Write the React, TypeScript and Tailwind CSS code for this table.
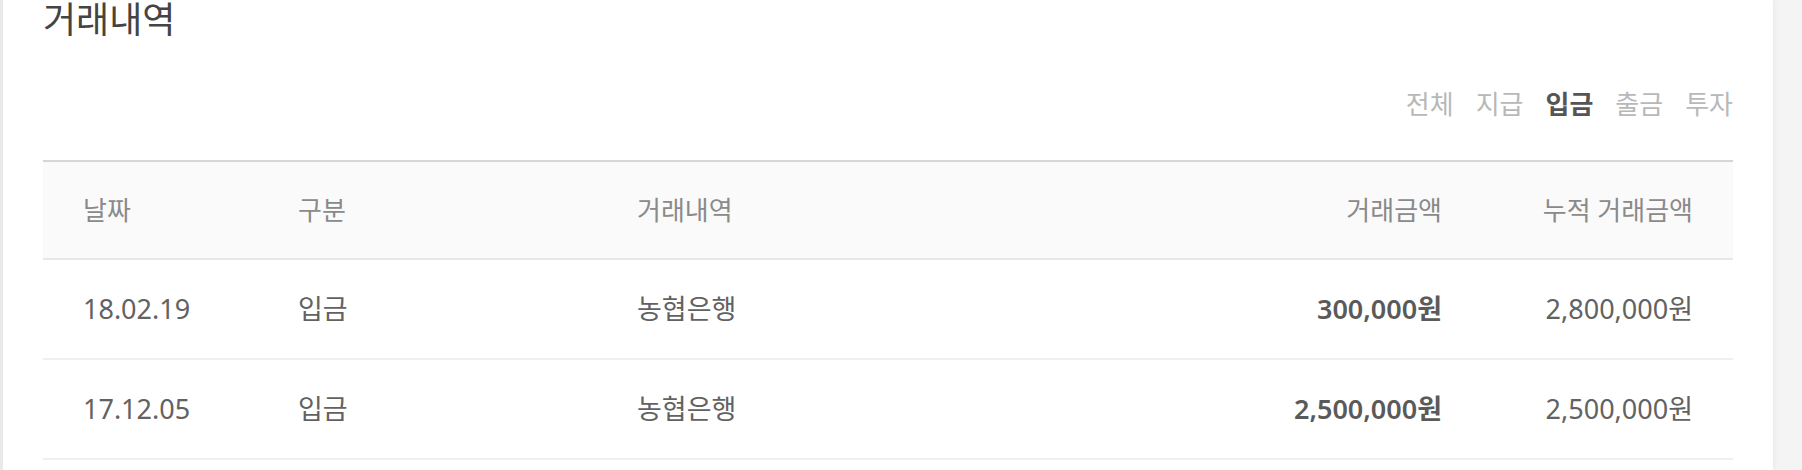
import React from "react";

const rows = [
  { date: "18.02.19", kind: "입금", desc: "농협은행", amount: "300,000원", total: "2,800,000원" },
  { date: "17.12.05", kind: "입금", desc: "농협은행", amount: "2,500,000원", total: "2,500,000원" },
];

const tabs = ["전체", "지급", "입금", "출금", "투자"];

export default function App() {
  return (
    <div
      className="min-h-screen bg-[#f4f4f4] flex"
      style={{ fontFamily: '"Noto Sans", "Noto Sans CJK KR", sans-serif' }}
    >
      <div className="w-[1773px] shrink-0 bg-white border-l-[3px] border-l-[#e9e9e9] shadow-[2px_0_4px_rgba(0,0,0,0.04)] px-[40px] flex flex-col">
        <h2 className="h-[40px] text-[36px] leading-[40px] text-[#444] font-normal">거래내역</h2>
        <div className="mt-[51px] flex justify-end gap-[22px] text-[26px] leading-none">
          {tabs.map((t) => (
            <span
              key={t}
              className={t === "입금" ? "text-[#555] font-bold" : "text-[#b8b8b8]"}
            >
              {t}
            </span>
          ))}
        </div>
        <div className="mt-[43px] border-t-2 border-t-[#d6d6d6]">
          <div className="grid grid-cols-[215px_339px_1fr_300px_251px] h-[98px] items-center bg-[#fafafa] border-b-2 border-b-[#e8e8e8] text-[26px] text-[#8a8a8a]">
            <div className="pl-[40px]">날짜</div>
            <div className="pl-[40px]">구분</div>
            <div className="pl-[40px]">거래내역</div>
            <div className="pr-[40px] text-right">거래금액</div>
            <div className="pr-[40px] text-right">누적 거래금액</div>
          </div>
          {rows.map((r) => (
            <div
              key={r.date}
              className="grid grid-cols-[215px_339px_1fr_300px_251px] h-[100px] items-center border-b-2 border-b-[#efefef] text-[27px] text-[#626262]"
            >
              <div className="pl-[40px]">{r.date}</div>
              <div className="pl-[40px]">{r.kind}</div>
              <div className="pl-[40px]">{r.desc}</div>
              <div className="pr-[40px] text-right font-semibold text-[#5a5a5a]">{r.amount}</div>
              <div className="pr-[40px] text-right">{r.total}</div>
            </div>
          ))}
        </div>
      </div>
    </div>
  );
}
